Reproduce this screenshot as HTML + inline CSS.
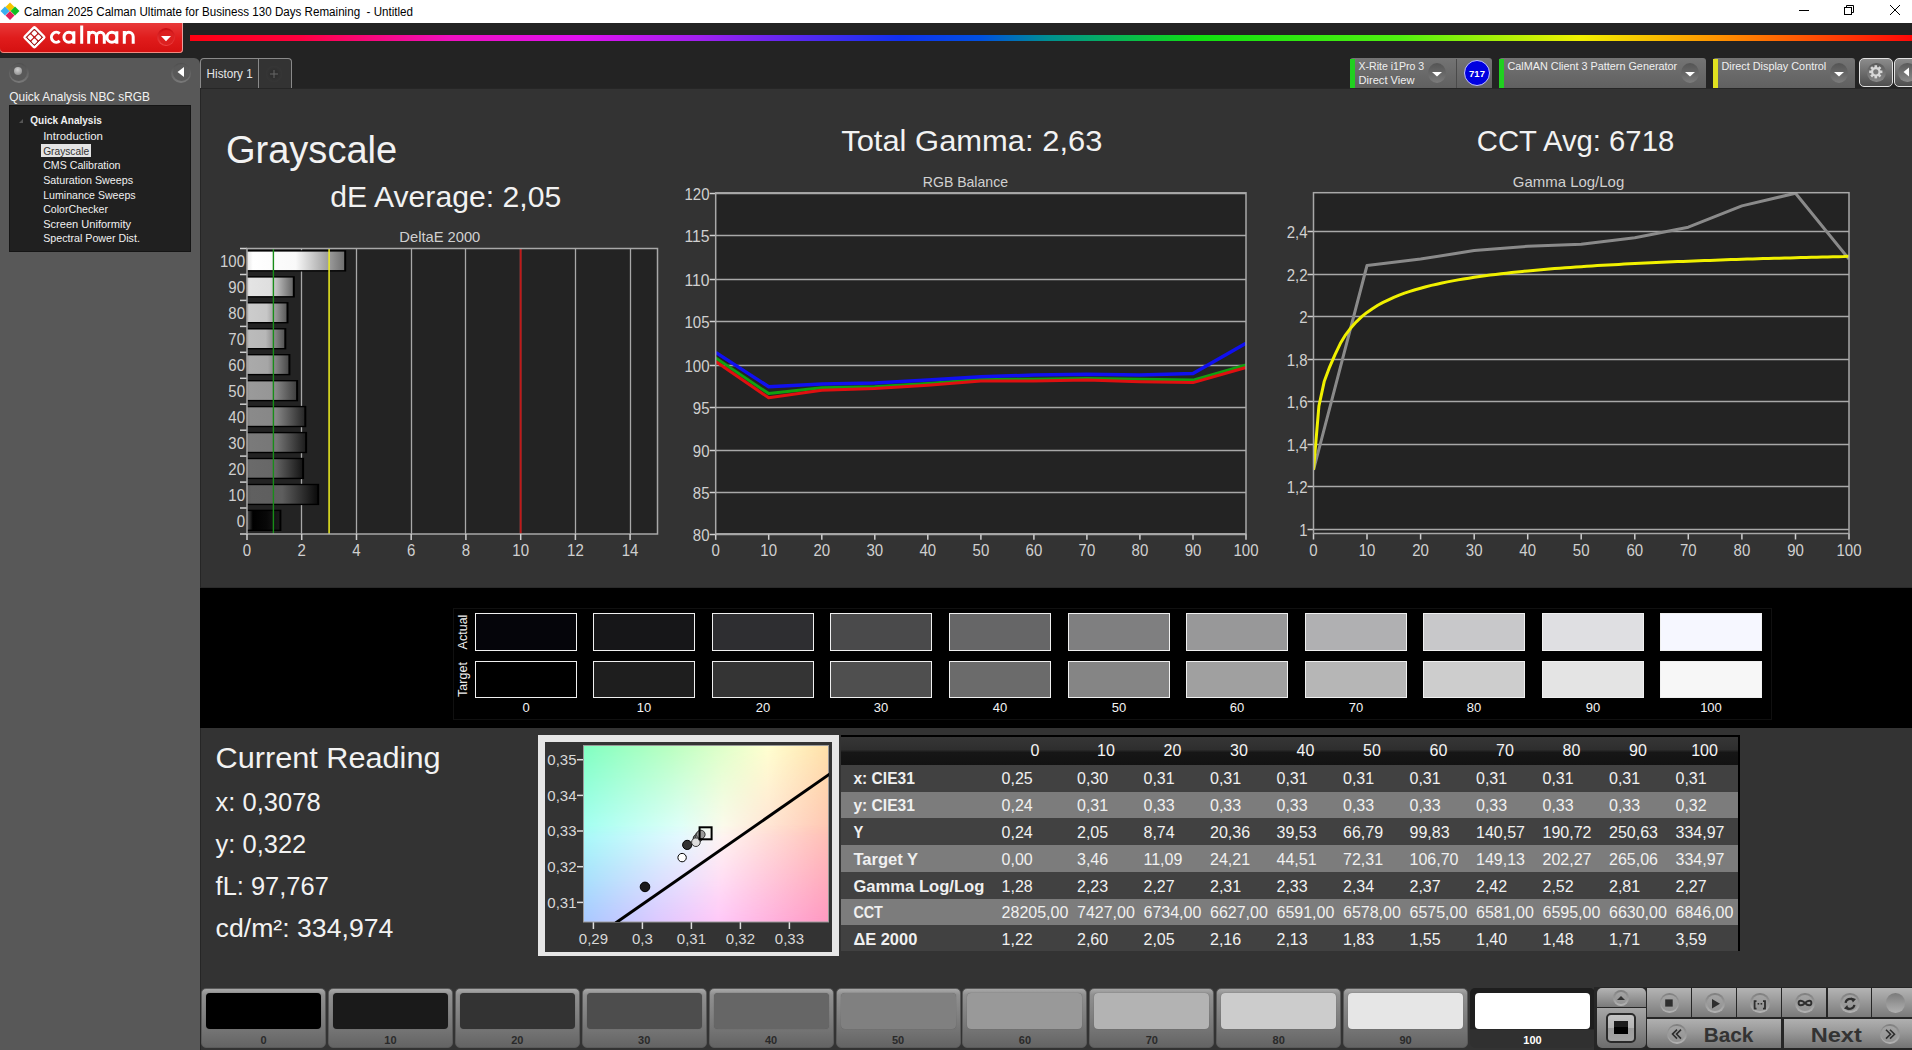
<!DOCTYPE html><html><head><meta charset="utf-8"><title>Calman</title><style>
*{box-sizing:border-box;margin:0;padding:0}
html,body{width:1912px;height:1050px;overflow:hidden;background:#232323;font-family:"Liberation Sans",sans-serif}
.a{position:absolute}
svg text{font-family:"Liberation Sans",sans-serif}
</style></head><body>
<div class="a" style="left:0;top:0;width:1912px;height:23px;background:#fff"></div>
<div class="a" style="left:190px;top:23px;width:1722px;height:35px;background:#232323"></div>
<div class="a" style="left:190px;top:35px;width:1722px;height:6px;filter:blur(0.6px);background:linear-gradient(to right,#ff0010 0.0%,#ff0040 6.4%,#f010c0 15.1%,#e010f0 22.6%,#a020f0 29.6%,#1030f0 41.2%,#0050e0 45.9%,#009090 49.9%,#10e010 58.7%,#50f010 70.3%,#f0f000 80.7%,#ff9000 88.9%,#ff0808 100.0%)"></div>
<div class="a" style="left:0;top:23px;width:183px;height:30px;border-radius:0 0 4px 4px;background:linear-gradient(to bottom,#e83a3a 0%,#e01c1c 50%,#d41010 100%);box-shadow:inset 0 -1px 0 #f08a80,inset -1px 0 0 #e8a0a0"></div>
<svg class="a" style="left:20px;top:23px" width="30" height="30" viewBox="0 0 30 30"><g transform="translate(14.4 14.3) rotate(45)"><rect x="-8.5" y="-8.5" width="17" height="17" rx="2.2" fill="#fff"/><rect x="-5.8" y="-5.8" width="11.6" height="11.6" fill="#c01818" stroke="#8a1010" stroke-width="0.9"/><rect x="-5.1" y="-5.1" width="4.5" height="4.5" rx="0.9" fill="#fff"/><rect x="0.6" y="-5.1" width="4.5" height="4.5" rx="0.9" fill="#fff"/><rect x="-5.1" y="0.6" width="4.5" height="4.5" rx="0.9" fill="#fff"/><rect x="0.6" y="0.6" width="4.5" height="4.5" rx="0.9" fill="#fff"/></g></svg>
<svg class="a" style="left:0;top:0" width="183" height="60"><path d="M59.71 33.57 A4.95 4.95 0 1 0 59.71 40.93 M63.95 37.25 A4.95 4.95 0 1 0 73.85 37.25 A4.95 4.95 0 1 0 63.95 37.25 M73.85 31.30 V43.70 M81.7 25.4 V43.7 M88.7 43.7 V36.20 A3.9 3.9 0 0 1 96.5 36.20 V43.7 M96.5 36.20 A3.9 3.9 0 0 1 104.3 36.20 V43.7 M88.7 31.1 V36.20 M106.95 37.25 A4.95 4.95 0 1 0 116.85 37.25 A4.95 4.95 0 1 0 106.95 37.25 M116.85 31.30 V43.70 M124.3 43.7 V31.1 M124.3 36.75 A4.45 4.45 0 0 1 133.2 36.75 V43.7" fill="none" stroke="#fff" stroke-width="3.0"/></svg>
<div class="a" style="left:157px;top:28px;width:18px;height:18px;border-radius:50%;background:linear-gradient(to bottom,#c80c10,#f04444)"></div>
<div class="a" style="left:158.5px;top:29.5px;width:15px;height:15px;border-radius:50%;background:#dc2020"></div>
<svg class="a" style="left:160px;top:35px" width="12" height="8"><path d="M1 1 H11 L6 6.3 Z" fill="#fff"/></svg>
<div class="a" style="left:0;top:58px;width:200px;height:992px;background:#585858;border-radius:0 6px 0 0"></div>
<div class="a" style="left:8.5px;top:62.5px;width:20px;height:20px;border-radius:50%;background:linear-gradient(to bottom,#4e4e4e,#7a7a7a)"></div>
<div class="a" style="left:10px;top:64px;width:17px;height:17px;border-radius:50%;background:#595959"></div>
<div class="a" style="left:14px;top:67px;width:8px;height:8px;border-radius:50%;background:radial-gradient(circle at 45% 35%,#d0d0d0,#808080)"></div>
<div class="a" style="left:171px;top:62.5px;width:20px;height:20px;border-radius:50%;background:linear-gradient(to bottom,#4e4e4e,#7a7a7a)"></div>
<div class="a" style="left:172.5px;top:64px;width:17px;height:17px;border-radius:50%;background:#595959"></div>
<svg class="a" style="left:176px;top:66px" width="10" height="12"><path d="M8 1 V11 L1.5 6 Z" fill="#fff"/></svg>
<div class="a" style="left:9px;top:105px;width:182px;height:147px;background:#202020;border:1px solid #151515"></div>
<div class="a" style="left:41px;top:143.5px;width:50px;height:13.5px;background:#e4e4e4"></div>
<div class="a" style="left:200px;top:58px;width:92px;height:31px;background:#333;border:1px solid #8a8a8a;border-bottom:none;border-radius:4px 4px 0 0"></div>
<div class="a" style="left:258px;top:59px;width:1px;height:29px;background:#8a8a8a"></div>
<div class="a" style="left:266px;top:66px;width:16px;height:16px;border-radius:50%;background:radial-gradient(circle,#2e2e2e 30%,#3c3c3c 100%)"></div>
<div class="a" style="left:1350px;top:58px;width:142px;height:30px;border-radius:3px 3px 0 0;background:linear-gradient(to bottom,#747474,#606060)"></div>
<div class="a" style="left:1350px;top:59px;width:5px;height:29px;background:#20d020"></div>
<div class="a" style="left:1428px;top:63px;width:18px;height:20px;border-radius:50%;background:linear-gradient(to bottom,#545454,#6a6a6a 60%,#7c7c7c)"></div>
<div class="a" style="left:1456px;top:59px;width:1px;height:29px;background:#4a4a4a"></div>
<div class="a" style="left:1464px;top:60px;width:26px;height:26px;border-radius:50%;background:#0000e0;border:1.5px solid #c0c0ff"></div>
<div class="a" style="left:1499px;top:58px;width:207px;height:30px;border-radius:3px 3px 0 0;background:linear-gradient(to bottom,#747474,#606060)"></div>
<div class="a" style="left:1499px;top:59px;width:5px;height:29px;background:#20d020"></div>
<div class="a" style="left:1681px;top:63px;width:18px;height:20px;border-radius:50%;background:linear-gradient(to bottom,#545454,#6a6a6a 60%,#7c7c7c)"></div>
<div class="a" style="left:1713px;top:58px;width:142px;height:30px;border-radius:3px 3px 0 0;background:linear-gradient(to bottom,#747474,#606060)"></div>
<div class="a" style="left:1713px;top:59px;width:5px;height:29px;background:#e0e020"></div>
<div class="a" style="left:1830px;top:63px;width:18px;height:20px;border-radius:50%;background:linear-gradient(to bottom,#545454,#6a6a6a 60%,#7c7c7c)"></div>
<div class="a" style="left:1859px;top:58px;width:34px;height:28.5px;border-radius:5px;border:1.5px solid #e0e0e0;background:linear-gradient(to bottom,#8c8c8c,#4e4e4e)"></div>
<div class="a" style="left:1893.5px;top:58px;width:25px;height:28.5px;border-radius:5px;border:1.5px solid #e0e0e0;background:linear-gradient(to bottom,#8c8c8c,#4e4e4e)"></div>
<div class="a" style="left:1866.5px;top:62.5px;width:19px;height:19.5px;border-radius:50%;background:linear-gradient(to bottom,#5a5a5a,#8a8a8a)"></div>
<div class="a" style="left:1897.5px;top:62.5px;width:19px;height:19.5px;border-radius:50%;background:linear-gradient(to bottom,#5a5a5a,#8a8a8a)"></div>
<div class="a" style="left:200px;top:88px;width:1712px;height:500px;background:#333;border-top:1px solid #262626;border-left:1px solid #262626;border-bottom:1px solid #2a2a2a"></div>
<div class="a" style="left:200px;top:588px;width:1712px;height:140px;background:#000"></div>
<div class="a" style="left:200px;top:728px;width:1712px;height:322px;background:#333;border-left:1px solid #262626"></div>
<div class="a" style="left:453px;top:608px;width:1319px;height:112px;background:#000;border:1px solid #101010"></div>
<div class="a" style="left:475.0px;top:613px;width:102px;height:38px;background:#05050a;border:1.3px solid #f0f0f0"></div>
<div class="a" style="left:475.0px;top:661px;width:102px;height:37px;background:#000000;border:1.3px solid #f0f0f0"></div>
<div class="a" style="left:593.0px;top:613px;width:102px;height:38px;background:#161618;border:1.3px solid #f0f0f0"></div>
<div class="a" style="left:593.0px;top:661px;width:102px;height:37px;background:#1e1e1e;border:1.3px solid #f0f0f0"></div>
<div class="a" style="left:712.0px;top:613px;width:102px;height:38px;background:#2e2e31;border:1.3px solid #f0f0f0"></div>
<div class="a" style="left:712.0px;top:661px;width:102px;height:37px;background:#343434;border:1.3px solid #f0f0f0"></div>
<div class="a" style="left:830.0px;top:613px;width:102px;height:38px;background:#4a4a4b;border:1.3px solid #f0f0f0"></div>
<div class="a" style="left:830.0px;top:661px;width:102px;height:37px;background:#4f4f4f;border:1.3px solid #f0f0f0"></div>
<div class="a" style="left:949.0px;top:613px;width:102px;height:38px;background:#666667;border:1.3px solid #f0f0f0"></div>
<div class="a" style="left:949.0px;top:661px;width:102px;height:37px;background:#6b6b6b;border:1.3px solid #f0f0f0"></div>
<div class="a" style="left:1068.0px;top:613px;width:102px;height:38px;background:#7f7f80;border:1.3px solid #f0f0f0"></div>
<div class="a" style="left:1068.0px;top:661px;width:102px;height:37px;background:#858585;border:1.3px solid #f0f0f0"></div>
<div class="a" style="left:1186.0px;top:613px;width:102px;height:38px;background:#989899;border:1.3px solid #f0f0f0"></div>
<div class="a" style="left:1186.0px;top:661px;width:102px;height:37px;background:#a0a0a0;border:1.3px solid #f0f0f0"></div>
<div class="a" style="left:1305.0px;top:613px;width:102px;height:38px;background:#b0b0b2;border:1.3px solid #f0f0f0"></div>
<div class="a" style="left:1305.0px;top:661px;width:102px;height:37px;background:#b6b6b6;border:1.3px solid #f0f0f0"></div>
<div class="a" style="left:1423.0px;top:613px;width:102px;height:38px;background:#c8c8ca;border:1.3px solid #f0f0f0"></div>
<div class="a" style="left:1423.0px;top:661px;width:102px;height:37px;background:#cdcdcd;border:1.3px solid #f0f0f0"></div>
<div class="a" style="left:1542.0px;top:613px;width:102px;height:38px;background:#dfdfe2;border:1.3px solid #f0f0f0"></div>
<div class="a" style="left:1542.0px;top:661px;width:102px;height:37px;background:#e4e4e4;border:1.3px solid #f0f0f0"></div>
<div class="a" style="left:1660.0px;top:613px;width:102px;height:38px;background:#f6f7ff;border:1.3px solid #f0f0f0"></div>
<div class="a" style="left:1660.0px;top:661px;width:102px;height:37px;background:#f7f7f7;border:1.3px solid #f0f0f0"></div>
<div class="a" style="left:538px;top:735px;width:301px;height:221px;background:#e6e6e6"></div>
<div class="a" style="left:545px;top:742px;width:287px;height:210px;background:#333"></div>
<div class="a" style="left:583px;top:745px;width:246px;height:177px;overflow:hidden"><div class="a" style="left:0;top:0;width:246px;height:177px;background:linear-gradient(to right,#a8fff8 0%,#e4ffff 40%,#fffaf0 57%,#ffc4b4 100%)"></div><div class="a" style="left:0;top:0;width:246px;height:177px;background:linear-gradient(to right,#80ffc0 0%,#b8ffc0 35%,#ffffd0 75%,#ffe0a8 100%);-webkit-mask-image:linear-gradient(to bottom,#000 0%,transparent 52%)"></div><div class="a" style="left:0;top:0;width:246px;height:177px;background:linear-gradient(to right,#a8c8ff 0%,#dcc8ff 30%,#ffc8f8 55%,#ff98c0 100%);-webkit-mask-image:linear-gradient(to top,#000 0%,transparent 55%)"></div></div>
<div class="a" style="left:841px;top:735px;width:899px;height:216px;background:#000"></div>
<div class="a" style="left:841px;top:737px;width:897px;height:28px;background:linear-gradient(to bottom,#363636 0%,#2e2e2e 45%,#161616 55%,#121212 100%)"></div>
<div class="a" style="left:841px;top:764.5px;width:897px;height:27.0px;background:#414141"></div>
<div class="a" style="left:841px;top:791.5px;width:897px;height:26.7px;background:#7c7c7c"></div>
<div class="a" style="left:841px;top:818.2px;width:897px;height:26.9px;background:#414141"></div>
<div class="a" style="left:841px;top:845.1px;width:897px;height:26.9px;background:#7c7c7c"></div>
<div class="a" style="left:841px;top:872px;width:897px;height:26.6px;background:#414141"></div>
<div class="a" style="left:841px;top:898.6px;width:897px;height:26.8px;background:#7c7c7c"></div>
<div class="a" style="left:841px;top:925.4px;width:897px;height:25.9px;background:#414141"></div>
<div class="a" style="left:201.0px;top:988px;width:125px;height:60px;border-radius:5px;border:1px solid #5a5a5a;background:linear-gradient(to bottom,#a8a8a8 0%,#909090 10%,#7a7a7a 60%,#646464 100%)"></div>
<div class="a" style="left:206.0px;top:993px;width:115px;height:36px;border-radius:4px;background:#000;box-shadow:0 0 1px #555"></div>
<div class="a" style="left:327.9px;top:988px;width:125px;height:60px;border-radius:5px;border:1px solid #5a5a5a;background:linear-gradient(to bottom,#a8a8a8 0%,#909090 10%,#7a7a7a 60%,#646464 100%)"></div>
<div class="a" style="left:332.9px;top:993px;width:115px;height:36px;border-radius:4px;background:#1a1a1a;box-shadow:0 0 1px #555"></div>
<div class="a" style="left:454.8px;top:988px;width:125px;height:60px;border-radius:5px;border:1px solid #5a5a5a;background:linear-gradient(to bottom,#a8a8a8 0%,#909090 10%,#7a7a7a 60%,#646464 100%)"></div>
<div class="a" style="left:459.8px;top:993px;width:115px;height:36px;border-radius:4px;background:#333;box-shadow:0 0 1px #555"></div>
<div class="a" style="left:581.7px;top:988px;width:125px;height:60px;border-radius:5px;border:1px solid #5a5a5a;background:linear-gradient(to bottom,#a8a8a8 0%,#909090 10%,#7a7a7a 60%,#646464 100%)"></div>
<div class="a" style="left:586.7px;top:993px;width:115px;height:36px;border-radius:4px;background:#4d4d4d;box-shadow:0 0 1px #555"></div>
<div class="a" style="left:708.6px;top:988px;width:125px;height:60px;border-radius:5px;border:1px solid #5a5a5a;background:linear-gradient(to bottom,#a8a8a8 0%,#909090 10%,#7a7a7a 60%,#646464 100%)"></div>
<div class="a" style="left:713.6px;top:993px;width:115px;height:36px;border-radius:4px;background:#666;box-shadow:0 0 1px #555"></div>
<div class="a" style="left:835.5px;top:988px;width:125px;height:60px;border-radius:5px;border:1px solid #5a5a5a;background:linear-gradient(to bottom,#a8a8a8 0%,#909090 10%,#7a7a7a 60%,#646464 100%)"></div>
<div class="a" style="left:840.5px;top:993px;width:115px;height:36px;border-radius:4px;background:#808080;box-shadow:0 0 1px #555"></div>
<div class="a" style="left:962.4px;top:988px;width:125px;height:60px;border-radius:5px;border:1px solid #5a5a5a;background:linear-gradient(to bottom,#a8a8a8 0%,#909090 10%,#7a7a7a 60%,#646464 100%)"></div>
<div class="a" style="left:967.4px;top:993px;width:115px;height:36px;border-radius:4px;background:#999;box-shadow:0 0 1px #555"></div>
<div class="a" style="left:1089.3px;top:988px;width:125px;height:60px;border-radius:5px;border:1px solid #5a5a5a;background:linear-gradient(to bottom,#a8a8a8 0%,#909090 10%,#7a7a7a 60%,#646464 100%)"></div>
<div class="a" style="left:1094.3px;top:993px;width:115px;height:36px;border-radius:4px;background:#b3b3b3;box-shadow:0 0 1px #555"></div>
<div class="a" style="left:1216.2px;top:988px;width:125px;height:60px;border-radius:5px;border:1px solid #5a5a5a;background:linear-gradient(to bottom,#a8a8a8 0%,#909090 10%,#7a7a7a 60%,#646464 100%)"></div>
<div class="a" style="left:1221.2px;top:993px;width:115px;height:36px;border-radius:4px;background:#ccc;box-shadow:0 0 1px #555"></div>
<div class="a" style="left:1343.1px;top:988px;width:125px;height:60px;border-radius:5px;border:1px solid #5a5a5a;background:linear-gradient(to bottom,#a8a8a8 0%,#909090 10%,#7a7a7a 60%,#646464 100%)"></div>
<div class="a" style="left:1348.1px;top:993px;width:115px;height:36px;border-radius:4px;background:#e6e6e6;box-shadow:0 0 1px #555"></div>
<div class="a" style="left:1470.0px;top:988px;width:125px;height:60px;border-radius:5px;background:linear-gradient(to bottom,#1e1e1e 0%,#1e1e1e 68%,#303030 70%,#303030 100%)"></div>
<div class="a" style="left:1475.0px;top:993px;width:115px;height:36px;border-radius:4px;background:#fff"></div>
<div class="a" style="left:1594px;top:987px;width:318px;height:63px;background:#262626"></div>
<div class="a" style="left:1597px;top:988px;width:48.5px;height:18.5px;border-radius:5px 5px 0 0;background:linear-gradient(to bottom,#b4b4b4 0%,#9a9a9a 45%,#7a7a7a 100%);"></div>
<div class="a" style="left:1597px;top:1007.5px;width:48.5px;height:40.5px;border-radius:0 0 5px 5px;background:linear-gradient(to bottom,#a6a6a6,#6c6c6c)"></div>
<div class="a" style="left:1613.0px;top:990.0px;width:16px;height:16px;border-radius:50%;background:linear-gradient(to bottom,#7e7e7e,#b4b4b4)"></div>
<div class="a" style="left:1614.6px;top:991.6px;width:12.8px;height:12.8px;border-radius:50%;background:linear-gradient(to bottom,#a4a4a4,#929292)"></div>
<div class="a" style="left:1605.5px;top:1012.7px;width:30.5px;height:30px;border-radius:5px;border:2.5px solid #2a2a2a;background:linear-gradient(to bottom,#c4c4c4 0%,#b4b4b4 50%,#9c9c9c 51%,#a4a4a4 100%)"></div>
<div class="a" style="left:1614.3px;top:1021.2px;width:13.3px;height:12.7px;background:linear-gradient(to bottom,#1c1c1c 50%,#000 50%)"></div>
<div class="a" style="left:1646.5px;top:988px;width:44.7px;height:29.2px;background:linear-gradient(to bottom,#b4b4b4 0%,#9a9a9a 45%,#7a7a7a 100%);"></div>
<div class="a" style="left:1659.7px;top:993.1px;width:19.6px;height:19.6px;border-radius:50%;background:linear-gradient(to bottom,#7e7e7e,#b4b4b4)"></div>
<div class="a" style="left:1661.2px;top:994.7px;width:16.4px;height:16.4px;border-radius:50%;background:linear-gradient(to bottom,#a4a4a4,#929292)"></div>
<div class="a" style="left:1692.4px;top:988px;width:43.8px;height:29.2px;background:linear-gradient(to bottom,#b4b4b4 0%,#9a9a9a 45%,#7a7a7a 100%);"></div>
<div class="a" style="left:1705.1px;top:993.1px;width:19.6px;height:19.6px;border-radius:50%;background:linear-gradient(to bottom,#7e7e7e,#b4b4b4)"></div>
<div class="a" style="left:1706.7px;top:994.7px;width:16.4px;height:16.4px;border-radius:50%;background:linear-gradient(to bottom,#a4a4a4,#929292)"></div>
<div class="a" style="left:1737.4px;top:988px;width:43.7px;height:29.2px;background:linear-gradient(to bottom,#b4b4b4 0%,#9a9a9a 45%,#7a7a7a 100%);"></div>
<div class="a" style="left:1750.0px;top:993.1px;width:19.6px;height:19.6px;border-radius:50%;background:linear-gradient(to bottom,#7e7e7e,#b4b4b4)"></div>
<div class="a" style="left:1751.6px;top:994.7px;width:16.4px;height:16.4px;border-radius:50%;background:linear-gradient(to bottom,#a4a4a4,#929292)"></div>
<div class="a" style="left:1782.3px;top:988px;width:44.1px;height:29.2px;background:linear-gradient(to bottom,#b4b4b4 0%,#9a9a9a 45%,#7a7a7a 100%);"></div>
<div class="a" style="left:1795.1px;top:993.1px;width:19.6px;height:19.6px;border-radius:50%;background:linear-gradient(to bottom,#7e7e7e,#b4b4b4)"></div>
<div class="a" style="left:1796.7px;top:994.7px;width:16.4px;height:16.4px;border-radius:50%;background:linear-gradient(to bottom,#a4a4a4,#929292)"></div>
<div class="a" style="left:1827.6px;top:988px;width:43.6px;height:29.2px;background:linear-gradient(to bottom,#b4b4b4 0%,#9a9a9a 45%,#7a7a7a 100%);"></div>
<div class="a" style="left:1840.2px;top:993.1px;width:19.6px;height:19.6px;border-radius:50%;background:linear-gradient(to bottom,#7e7e7e,#b4b4b4)"></div>
<div class="a" style="left:1841.8px;top:994.7px;width:16.4px;height:16.4px;border-radius:50%;background:linear-gradient(to bottom,#a4a4a4,#929292)"></div>
<div class="a" style="left:1872.4px;top:988px;width:40.4px;height:29.2px;background:linear-gradient(to bottom,#b4b4b4 0%,#9a9a9a 45%,#7a7a7a 100%);"></div>
<div class="a" style="left:1885.9px;top:993.1px;width:19.6px;height:19.6px;border-radius:50%;background:linear-gradient(to bottom,#7a7a7a,#9c9c9c 60%,#b0b0b0)"></div>
<div class="a" style="left:1646.5px;top:1019px;width:134.6px;height:29px;border-radius:0 0 0 4px;background:linear-gradient(to bottom,#b0b0b0 0%,#989898 45%,#747474 100%)"></div>
<div class="a" style="left:1783.5px;top:1019px;width:130px;height:29px;background:linear-gradient(to bottom,#b0b0b0 0%,#989898 45%,#747474 100%)"></div>
<div class="a" style="left:1666.7px;top:1024.0px;width:20px;height:20px;border-radius:50%;background:linear-gradient(to bottom,#7e7e7e,#b4b4b4)"></div>
<div class="a" style="left:1668.3px;top:1025.6px;width:16.8px;height:16.8px;border-radius:50%;background:linear-gradient(to bottom,#a4a4a4,#929292)"></div>
<div class="a" style="left:1879.8px;top:1024.0px;width:20px;height:20px;border-radius:50%;background:linear-gradient(to bottom,#7e7e7e,#b4b4b4)"></div>
<div class="a" style="left:1881.4px;top:1025.6px;width:16.8px;height:16.8px;border-radius:50%;background:linear-gradient(to bottom,#a4a4a4,#929292)"></div>
<svg class="a" style="left:0;top:0" width="1912" height="1050" viewBox="0 0 1912 1050">
<defs><linearGradient id="bg10" x1="0" x2="1" y1="0" y2="0"><stop offset="0" stop-color="rgb(229,229,229)"/><stop offset="0.06" stop-color="rgb(255,255,255)"/><stop offset="0.5" stop-color="rgb(249,249,249)"/><stop offset="1" stop-color="rgb(112,112,112)"/></linearGradient><linearGradient id="bg9" x1="0" x2="1" y1="0" y2="0"><stop offset="0" stop-color="rgb(205,205,205)"/><stop offset="0.06" stop-color="rgb(228,228,228)"/><stop offset="0.5" stop-color="rgb(223,223,223)"/><stop offset="1" stop-color="rgb(102,102,102)"/></linearGradient><linearGradient id="bg8" x1="0" x2="1" y1="0" y2="0"><stop offset="0" stop-color="rgb(183,183,183)"/><stop offset="0.06" stop-color="rgb(204,204,204)"/><stop offset="0.5" stop-color="rgb(199,199,199)"/><stop offset="1" stop-color="rgb(92,92,92)"/></linearGradient><linearGradient id="bg7" x1="0" x2="1" y1="0" y2="0"><stop offset="0" stop-color="rgb(168,168,168)"/><stop offset="0.06" stop-color="rgb(187,187,187)"/><stop offset="0.5" stop-color="rgb(183,183,183)"/><stop offset="1" stop-color="rgb(84,84,84)"/></linearGradient><linearGradient id="bg6" x1="0" x2="1" y1="0" y2="0"><stop offset="0" stop-color="rgb(153,153,153)"/><stop offset="0.06" stop-color="rgb(170,170,170)"/><stop offset="0.5" stop-color="rgb(166,166,166)"/><stop offset="1" stop-color="rgb(74,74,74)"/></linearGradient><linearGradient id="bg5" x1="0" x2="1" y1="0" y2="0"><stop offset="0" stop-color="rgb(138,138,138)"/><stop offset="0.06" stop-color="rgb(154,154,154)"/><stop offset="0.5" stop-color="rgb(150,150,150)"/><stop offset="1" stop-color="rgb(64,64,64)"/></linearGradient><linearGradient id="bg4" x1="0" x2="1" y1="0" y2="0"><stop offset="0" stop-color="rgb(124,124,124)"/><stop offset="0.06" stop-color="rgb(138,138,138)"/><stop offset="0.5" stop-color="rgb(135,135,135)"/><stop offset="1" stop-color="rgb(40,40,40)"/></linearGradient><linearGradient id="bg3" x1="0" x2="1" y1="0" y2="0"><stop offset="0" stop-color="rgb(109,109,109)"/><stop offset="0.06" stop-color="rgb(122,122,122)"/><stop offset="0.5" stop-color="rgb(119,119,119)"/><stop offset="1" stop-color="rgb(30,30,30)"/></linearGradient><linearGradient id="bg2" x1="0" x2="1" y1="0" y2="0"><stop offset="0" stop-color="rgb(95,95,95)"/><stop offset="0.06" stop-color="rgb(106,106,106)"/><stop offset="0.5" stop-color="rgb(103,103,103)"/><stop offset="1" stop-color="rgb(22,22,22)"/></linearGradient><linearGradient id="bg1" x1="0" x2="1" y1="0" y2="0"><stop offset="0" stop-color="rgb(86,86,86)"/><stop offset="0.06" stop-color="rgb(96,96,96)"/><stop offset="0.5" stop-color="rgb(94,94,94)"/><stop offset="1" stop-color="rgb(12,12,12)"/></linearGradient><linearGradient id="bg0" x1="0" x2="1" y1="0" y2="0"><stop offset="0" stop-color="rgb(80,80,80)"/><stop offset="0.18" stop-color="rgb(0,0,0)"/><stop offset="0.6" stop-color="rgb(8,8,8)"/><stop offset="1" stop-color="rgb(26,26,26)"/></linearGradient></defs>
<g><rect x="6.8" y="3.8" width="6.4" height="6.4" fill="#f5c400" transform="rotate(45 10 7)"/><rect x="1.7999999999999998" y="7.8" width="6.4" height="6.4" fill="#3ab0f0" transform="rotate(45 5 11)"/><rect x="11.8" y="7.8" width="6.4" height="6.4" fill="#10c020" transform="rotate(45 15 11)"/><rect x="6.8" y="12.3" width="6.4" height="6.4" fill="#e0205a" transform="rotate(45 10 15.5)"/></g><text x="24" y="16" font-size="12" fill="#000" text-anchor="start" font-weight="normal"  textLength="389" lengthAdjust="spacingAndGlyphs">Calman 2025 Calman Ultimate for Business 130 Days Remaining&#160; - Untitled</text><line x1="1799" y1="10.5" x2="1809" y2="10.5" stroke="#000" stroke-width="1"/><path d="M1846.5 7 V5.5 H1853.5 V12.5 H1852" fill="none" stroke="#000" stroke-width="1"/><rect x="1844.5" y="7.5" width="7" height="7" fill="none" stroke="#000" stroke-width="1"/><path d="M1890 5 L1900 15 M1900 5 L1890 15" stroke="#000" stroke-width="1"/>
<text x="9.3" y="101" font-size="12" fill="#f2f2f2" text-anchor="start" font-weight="normal"  textLength="140.6" lengthAdjust="spacingAndGlyphs">Quick Analysis NBC sRGB</text><path d="M19 123 L23 119 L23 123 Z" fill="#555"/><text x="30.2" y="124.3" font-size="11" fill="#f0f0f0" text-anchor="start" font-weight="bold"  textLength="71.6" lengthAdjust="spacingAndGlyphs">Quick Analysis</text><text x="43.2" y="140.1" font-size="11" fill="#f0f0f0" text-anchor="start" font-weight="normal"  textLength="59.7" lengthAdjust="spacingAndGlyphs">Introduction</text><text x="43.2" y="154.7" font-size="11" fill="#333" text-anchor="start" font-weight="normal"  textLength="45.9" lengthAdjust="spacingAndGlyphs">Grayscale</text><text x="43.2" y="169.29999999999998" font-size="11" fill="#f0f0f0" text-anchor="start" font-weight="normal"  textLength="77.3" lengthAdjust="spacingAndGlyphs">CMS Calibration</text><text x="43.2" y="183.89999999999998" font-size="11" fill="#f0f0f0" text-anchor="start" font-weight="normal"  textLength="89.9" lengthAdjust="spacingAndGlyphs">Saturation Sweeps</text><text x="43.2" y="198.5" font-size="11" fill="#f0f0f0" text-anchor="start" font-weight="normal"  textLength="92.4" lengthAdjust="spacingAndGlyphs">Luminance Sweeps</text><text x="43.2" y="213.1" font-size="11" fill="#f0f0f0" text-anchor="start" font-weight="normal"  textLength="64.8" lengthAdjust="spacingAndGlyphs">ColorChecker</text><text x="43.2" y="227.7" font-size="11" fill="#f0f0f0" text-anchor="start" font-weight="normal"  textLength="87.9" lengthAdjust="spacingAndGlyphs">Screen Uniformity</text><text x="43.2" y="242.3" font-size="11" fill="#f0f0f0" text-anchor="start" font-weight="normal"  textLength="96.7" lengthAdjust="spacingAndGlyphs">Spectral Power Dist.</text><text x="206.6" y="78.2" font-size="12" fill="#e6e6e6" text-anchor="start" font-weight="normal"  textLength="46.1" lengthAdjust="spacingAndGlyphs">History 1</text><path d="M274 70 V78 M270 74 H278" stroke="#666" stroke-width="1"/><text x="1358.5" y="70" font-size="11" fill="#f0f0f0" text-anchor="start" font-weight="normal"  textLength="65.6" lengthAdjust="spacingAndGlyphs">X-Rite i1Pro 3</text><text x="1358.5" y="84" font-size="11" fill="#f0f0f0" text-anchor="start" font-weight="normal"  textLength="56" lengthAdjust="spacingAndGlyphs">Direct View</text><path d="M1432 72 H1442 L1437 76.5 Z" fill="#fff"/><text x="1477" y="76.5" font-size="9.5" fill="#fff" text-anchor="middle" font-weight="bold" >717</text><text x="1507.5" y="70" font-size="11" fill="#f0f0f0" text-anchor="start" font-weight="normal"  textLength="169.7" lengthAdjust="spacingAndGlyphs">CalMAN Client 3 Pattern Generator</text><path d="M1685 72 H1695 L1690 76.5 Z" fill="#fff"/><text x="1721.5" y="70" font-size="11" fill="#f0f0f0" text-anchor="start" font-weight="normal"  textLength="104.7" lengthAdjust="spacingAndGlyphs">Direct Display Control</text><path d="M1834 72 H1844 L1839 76.5 Z" fill="#fff"/><g transform="translate(1875.8 71.8)" fill="#d8d8d8"><rect x="-1.3" y="-6.6" width="2.6" height="3" transform="rotate(0)"/><rect x="-1.3" y="-6.6" width="2.6" height="3" transform="rotate(45)"/><rect x="-1.3" y="-6.6" width="2.6" height="3" transform="rotate(90)"/><rect x="-1.3" y="-6.6" width="2.6" height="3" transform="rotate(135)"/><rect x="-1.3" y="-6.6" width="2.6" height="3" transform="rotate(180)"/><rect x="-1.3" y="-6.6" width="2.6" height="3" transform="rotate(225)"/><rect x="-1.3" y="-6.6" width="2.6" height="3" transform="rotate(270)"/><rect x="-1.3" y="-6.6" width="2.6" height="3" transform="rotate(315)"/><circle r="4.8"/><circle r="2.6" fill="#7a7a7a"/></g><path d="M1909 67.5 V76.5 L1903.5 72 Z" fill="#fff"/><text x="225.9" y="162.8" font-size="38" fill="#f2f2f2" text-anchor="start" font-weight="normal"  textLength="171.3" lengthAdjust="spacingAndGlyphs">Grayscale</text><text x="330.3" y="206.7" font-size="29" fill="#f2f2f2" text-anchor="start" font-weight="normal"  textLength="230.9" lengthAdjust="spacingAndGlyphs">dE Average: 2,05</text><text x="841.2" y="150.8" font-size="30" fill="#f2f2f2" text-anchor="start" font-weight="normal"  textLength="261.2" lengthAdjust="spacingAndGlyphs">Total Gamma: 2,63</text><text x="1476.8" y="151" font-size="30" fill="#f2f2f2" text-anchor="start" font-weight="normal"  textLength="197.4" lengthAdjust="spacingAndGlyphs">CCT Avg: 6718</text><text x="439.8" y="242.4" font-size="14.5" fill="#d0d0d0" text-anchor="middle" font-weight="normal"  textLength="80.9" lengthAdjust="spacingAndGlyphs">DeltaE 2000</text><rect x="247" y="248.5" width="410.5" height="285.5" fill="#232323"/><line x1="301.5" y1="248.5" x2="301.5" y2="534" stroke="#a8a8a8" stroke-width="1.3"/><line x1="356.5" y1="248.5" x2="356.5" y2="534" stroke="#a8a8a8" stroke-width="1.3"/><line x1="411.5" y1="248.5" x2="411.5" y2="534" stroke="#a8a8a8" stroke-width="1.3"/><line x1="465.5" y1="248.5" x2="465.5" y2="534" stroke="#a8a8a8" stroke-width="1.3"/><line x1="520.5" y1="248.5" x2="520.5" y2="534" stroke="#a8a8a8" stroke-width="1.3"/><line x1="575.5" y1="248.5" x2="575.5" y2="534" stroke="#a8a8a8" stroke-width="1.3"/><line x1="630.5" y1="248.5" x2="630.5" y2="534" stroke="#a8a8a8" stroke-width="1.3"/><rect x="247" y="250.2" width="99.2" height="21.3" fill="#000"/><rect x="247" y="251.6" width="97.2" height="18.5" fill="url(#bg10)"/><text x="245" y="267.47727272727275" font-size="16.2" fill="#d0d0d0" text-anchor="end" font-weight="normal"  textLength="25.02" lengthAdjust="spacingAndGlyphs">100</text><rect x="247" y="276.2" width="47.8" height="21.3" fill="#000"/><rect x="247" y="277.6" width="45.8" height="18.5" fill="url(#bg9)"/><text x="245" y="293.4318181818182" font-size="16.2" fill="#d0d0d0" text-anchor="end" font-weight="normal"  textLength="16.68" lengthAdjust="spacingAndGlyphs">90</text><rect x="247" y="302.1" width="41.5" height="21.3" fill="#000"/><rect x="247" y="303.5" width="39.5" height="18.5" fill="url(#bg8)"/><text x="245" y="319.3863636363636" font-size="16.2" fill="#d0d0d0" text-anchor="end" font-weight="normal"  textLength="16.68" lengthAdjust="spacingAndGlyphs">80</text><rect x="247" y="328.1" width="39.3" height="21.3" fill="#000"/><rect x="247" y="329.5" width="37.3" height="18.5" fill="url(#bg7)"/><text x="245" y="345.3409090909091" font-size="16.2" fill="#d0d0d0" text-anchor="end" font-weight="normal"  textLength="16.68" lengthAdjust="spacingAndGlyphs">70</text><rect x="247" y="354.0" width="43.4" height="21.3" fill="#000"/><rect x="247" y="355.4" width="41.4" height="18.5" fill="url(#bg6)"/><text x="245" y="371.29545454545456" font-size="16.2" fill="#d0d0d0" text-anchor="end" font-weight="normal"  textLength="16.68" lengthAdjust="spacingAndGlyphs">60</text><rect x="247" y="380.0" width="51.1" height="21.3" fill="#000"/><rect x="247" y="381.4" width="49.1" height="18.5" fill="url(#bg5)"/><text x="245" y="397.25" font-size="16.2" fill="#d0d0d0" text-anchor="end" font-weight="normal"  textLength="16.68" lengthAdjust="spacingAndGlyphs">50</text><rect x="247" y="405.9" width="59.3" height="21.3" fill="#000"/><rect x="247" y="407.3" width="57.3" height="18.5" fill="url(#bg4)"/><text x="245" y="423.2045454545455" font-size="16.2" fill="#d0d0d0" text-anchor="end" font-weight="normal"  textLength="16.68" lengthAdjust="spacingAndGlyphs">40</text><rect x="247" y="431.9" width="60.1" height="21.3" fill="#000"/><rect x="247" y="433.3" width="58.1" height="18.5" fill="url(#bg3)"/><text x="245" y="449.15909090909093" font-size="16.2" fill="#d0d0d0" text-anchor="end" font-weight="normal"  textLength="16.68" lengthAdjust="spacingAndGlyphs">30</text><rect x="247" y="457.8" width="57.1" height="21.3" fill="#000"/><rect x="247" y="459.2" width="55.1" height="18.5" fill="url(#bg2)"/><text x="245" y="475.1136363636364" font-size="16.2" fill="#d0d0d0" text-anchor="end" font-weight="normal"  textLength="16.68" lengthAdjust="spacingAndGlyphs">20</text><rect x="247" y="483.8" width="72.2" height="21.3" fill="#000"/><rect x="247" y="485.2" width="70.2" height="18.5" fill="url(#bg1)"/><text x="245" y="501.0681818181818" font-size="16.2" fill="#d0d0d0" text-anchor="end" font-weight="normal"  textLength="16.68" lengthAdjust="spacingAndGlyphs">10</text><rect x="247" y="509.7" width="34.4" height="21.3" fill="#000"/><rect x="247" y="511.1" width="32.4" height="18.5" fill="url(#bg0)"/><text x="245" y="527.0227272727273" font-size="16.2" fill="#d0d0d0" text-anchor="end" font-weight="normal"  textLength="8.34" lengthAdjust="spacingAndGlyphs">0</text><line x1="240" y1="248.5" x2="247" y2="248.5" stroke="#d0d0d0" stroke-width="1.5"/><line x1="240" y1="274.5" x2="247" y2="274.5" stroke="#d0d0d0" stroke-width="1.5"/><line x1="240" y1="300.4" x2="247" y2="300.4" stroke="#d0d0d0" stroke-width="1.5"/><line x1="240" y1="326.4" x2="247" y2="326.4" stroke="#d0d0d0" stroke-width="1.5"/><line x1="240" y1="352.3" x2="247" y2="352.3" stroke="#d0d0d0" stroke-width="1.5"/><line x1="240" y1="378.3" x2="247" y2="378.3" stroke="#d0d0d0" stroke-width="1.5"/><line x1="240" y1="404.2" x2="247" y2="404.2" stroke="#d0d0d0" stroke-width="1.5"/><line x1="240" y1="430.2" x2="247" y2="430.2" stroke="#d0d0d0" stroke-width="1.5"/><line x1="240" y1="456.1" x2="247" y2="456.1" stroke="#d0d0d0" stroke-width="1.5"/><line x1="240" y1="482.1" x2="247" y2="482.1" stroke="#d0d0d0" stroke-width="1.5"/><line x1="240" y1="508.0" x2="247" y2="508.0" stroke="#d0d0d0" stroke-width="1.5"/><line x1="240" y1="534.0" x2="247" y2="534.0" stroke="#d0d0d0" stroke-width="1.5"/><line x1="273.4" y1="248.5" x2="273.4" y2="534" stroke="#188c18" stroke-width="1.4"/><line x1="329.1" y1="248.5" x2="329.1" y2="534" stroke="#f0f020" stroke-width="1.5"/><line x1="520.7" y1="248.5" x2="520.7" y2="534" stroke="#c01818" stroke-width="1.8"/><rect x="247" y="248.5" width="410.5" height="285.5" fill="none" stroke="#a8a8a8" stroke-width="1.5"/><line x1="247.0" y1="534" x2="247.0" y2="540" stroke="#d0d0d0" stroke-width="1.5"/><text x="247.0" y="556" font-size="16.2" fill="#d0d0d0" text-anchor="middle" font-weight="normal"  textLength="8.34" lengthAdjust="spacingAndGlyphs">0</text><line x1="301.7" y1="534" x2="301.7" y2="540" stroke="#d0d0d0" stroke-width="1.5"/><text x="301.7" y="556" font-size="16.2" fill="#d0d0d0" text-anchor="middle" font-weight="normal"  textLength="8.34" lengthAdjust="spacingAndGlyphs">2</text><line x1="356.5" y1="534" x2="356.5" y2="540" stroke="#d0d0d0" stroke-width="1.5"/><text x="356.5" y="556" font-size="16.2" fill="#d0d0d0" text-anchor="middle" font-weight="normal"  textLength="8.34" lengthAdjust="spacingAndGlyphs">4</text><line x1="411.2" y1="534" x2="411.2" y2="540" stroke="#d0d0d0" stroke-width="1.5"/><text x="411.2" y="556" font-size="16.2" fill="#d0d0d0" text-anchor="middle" font-weight="normal"  textLength="8.34" lengthAdjust="spacingAndGlyphs">6</text><line x1="465.9" y1="534" x2="465.9" y2="540" stroke="#d0d0d0" stroke-width="1.5"/><text x="465.9" y="556" font-size="16.2" fill="#d0d0d0" text-anchor="middle" font-weight="normal"  textLength="8.34" lengthAdjust="spacingAndGlyphs">8</text><line x1="520.7" y1="534" x2="520.7" y2="540" stroke="#d0d0d0" stroke-width="1.5"/><text x="520.7" y="556" font-size="16.2" fill="#d0d0d0" text-anchor="middle" font-weight="normal"  textLength="16.68" lengthAdjust="spacingAndGlyphs">10</text><line x1="575.4" y1="534" x2="575.4" y2="540" stroke="#d0d0d0" stroke-width="1.5"/><text x="575.4" y="556" font-size="16.2" fill="#d0d0d0" text-anchor="middle" font-weight="normal"  textLength="16.68" lengthAdjust="spacingAndGlyphs">12</text><line x1="630.1" y1="534" x2="630.1" y2="540" stroke="#d0d0d0" stroke-width="1.5"/><text x="630.1" y="556" font-size="16.2" fill="#d0d0d0" text-anchor="middle" font-weight="normal"  textLength="16.68" lengthAdjust="spacingAndGlyphs">14</text><text x="965.4" y="186.9" font-size="14.5" fill="#d0d0d0" text-anchor="middle" font-weight="normal"  textLength="85.2" lengthAdjust="spacingAndGlyphs">RGB Balance</text><rect x="715.7" y="192.8" width="530.3" height="340.99999999999994" fill="#232323"/><line x1="715.7" y1="193.5" x2="1246" y2="193.5" stroke="#a8a8a8" stroke-width="1.3"/><line x1="709.7" y1="193.5" x2="715.7" y2="193.5" stroke="#d0d0d0" stroke-width="1.5"/><text x="709.5" y="199.5" font-size="16.2" fill="#d0d0d0" text-anchor="end" font-weight="normal"  textLength="25.02" lengthAdjust="spacingAndGlyphs">120</text><line x1="715.7" y1="235.5" x2="1246" y2="235.5" stroke="#a8a8a8" stroke-width="1.3"/><line x1="709.7" y1="235.5" x2="715.7" y2="235.5" stroke="#d0d0d0" stroke-width="1.5"/><text x="709.5" y="241.5" font-size="16.2" fill="#d0d0d0" text-anchor="end" font-weight="normal"  textLength="25.02" lengthAdjust="spacingAndGlyphs">115</text><line x1="715.7" y1="279.5" x2="1246" y2="279.5" stroke="#a8a8a8" stroke-width="1.3"/><line x1="709.7" y1="279.5" x2="715.7" y2="279.5" stroke="#d0d0d0" stroke-width="1.5"/><text x="709.5" y="285.5" font-size="16.2" fill="#d0d0d0" text-anchor="end" font-weight="normal"  textLength="25.02" lengthAdjust="spacingAndGlyphs">110</text><line x1="715.7" y1="321.5" x2="1246" y2="321.5" stroke="#a8a8a8" stroke-width="1.3"/><line x1="709.7" y1="321.5" x2="715.7" y2="321.5" stroke="#d0d0d0" stroke-width="1.5"/><text x="709.5" y="327.5" font-size="16.2" fill="#d0d0d0" text-anchor="end" font-weight="normal"  textLength="25.02" lengthAdjust="spacingAndGlyphs">105</text><line x1="715.7" y1="365.5" x2="1246" y2="365.5" stroke="#a8a8a8" stroke-width="1.3"/><line x1="709.7" y1="365.5" x2="715.7" y2="365.5" stroke="#d0d0d0" stroke-width="1.5"/><text x="709.5" y="371.5" font-size="16.2" fill="#d0d0d0" text-anchor="end" font-weight="normal"  textLength="25.02" lengthAdjust="spacingAndGlyphs">100</text><line x1="715.7" y1="407.5" x2="1246" y2="407.5" stroke="#a8a8a8" stroke-width="1.3"/><line x1="709.7" y1="407.5" x2="715.7" y2="407.5" stroke="#d0d0d0" stroke-width="1.5"/><text x="709.5" y="413.5" font-size="16.2" fill="#d0d0d0" text-anchor="end" font-weight="normal"  textLength="16.68" lengthAdjust="spacingAndGlyphs">95</text><line x1="715.7" y1="450.5" x2="1246" y2="450.5" stroke="#a8a8a8" stroke-width="1.3"/><line x1="709.7" y1="450.5" x2="715.7" y2="450.5" stroke="#d0d0d0" stroke-width="1.5"/><text x="709.5" y="456.5" font-size="16.2" fill="#d0d0d0" text-anchor="end" font-weight="normal"  textLength="16.68" lengthAdjust="spacingAndGlyphs">90</text><line x1="715.7" y1="492.5" x2="1246" y2="492.5" stroke="#a8a8a8" stroke-width="1.3"/><line x1="709.7" y1="492.5" x2="715.7" y2="492.5" stroke="#d0d0d0" stroke-width="1.5"/><text x="709.5" y="498.5" font-size="16.2" fill="#d0d0d0" text-anchor="end" font-weight="normal"  textLength="16.68" lengthAdjust="spacingAndGlyphs">85</text><line x1="715.7" y1="534.5" x2="1246" y2="534.5" stroke="#a8a8a8" stroke-width="1.3"/><line x1="709.7" y1="534.5" x2="715.7" y2="534.5" stroke="#d0d0d0" stroke-width="1.5"/><text x="709.5" y="540.5" font-size="16.2" fill="#d0d0d0" text-anchor="end" font-weight="normal"  textLength="16.68" lengthAdjust="spacingAndGlyphs">80</text><line x1="715.7" y1="533.8" x2="715.7" y2="539.8" stroke="#d0d0d0" stroke-width="1.5"/><text x="715.7" y="556" font-size="16.2" fill="#d0d0d0" text-anchor="middle" font-weight="normal"  textLength="8.34" lengthAdjust="spacingAndGlyphs">0</text><line x1="768.7" y1="533.8" x2="768.7" y2="539.8" stroke="#d0d0d0" stroke-width="1.5"/><text x="768.7" y="556" font-size="16.2" fill="#d0d0d0" text-anchor="middle" font-weight="normal"  textLength="16.68" lengthAdjust="spacingAndGlyphs">10</text><line x1="821.8" y1="533.8" x2="821.8" y2="539.8" stroke="#d0d0d0" stroke-width="1.5"/><text x="821.8" y="556" font-size="16.2" fill="#d0d0d0" text-anchor="middle" font-weight="normal"  textLength="16.68" lengthAdjust="spacingAndGlyphs">20</text><line x1="874.8" y1="533.8" x2="874.8" y2="539.8" stroke="#d0d0d0" stroke-width="1.5"/><text x="874.8" y="556" font-size="16.2" fill="#d0d0d0" text-anchor="middle" font-weight="normal"  textLength="16.68" lengthAdjust="spacingAndGlyphs">30</text><line x1="927.8" y1="533.8" x2="927.8" y2="539.8" stroke="#d0d0d0" stroke-width="1.5"/><text x="927.8" y="556" font-size="16.2" fill="#d0d0d0" text-anchor="middle" font-weight="normal"  textLength="16.68" lengthAdjust="spacingAndGlyphs">40</text><line x1="980.9" y1="533.8" x2="980.9" y2="539.8" stroke="#d0d0d0" stroke-width="1.5"/><text x="980.9" y="556" font-size="16.2" fill="#d0d0d0" text-anchor="middle" font-weight="normal"  textLength="16.68" lengthAdjust="spacingAndGlyphs">50</text><line x1="1033.9" y1="533.8" x2="1033.9" y2="539.8" stroke="#d0d0d0" stroke-width="1.5"/><text x="1033.9" y="556" font-size="16.2" fill="#d0d0d0" text-anchor="middle" font-weight="normal"  textLength="16.68" lengthAdjust="spacingAndGlyphs">60</text><line x1="1086.9" y1="533.8" x2="1086.9" y2="539.8" stroke="#d0d0d0" stroke-width="1.5"/><text x="1086.9" y="556" font-size="16.2" fill="#d0d0d0" text-anchor="middle" font-weight="normal"  textLength="16.68" lengthAdjust="spacingAndGlyphs">70</text><line x1="1139.9" y1="533.8" x2="1139.9" y2="539.8" stroke="#d0d0d0" stroke-width="1.5"/><text x="1139.9" y="556" font-size="16.2" fill="#d0d0d0" text-anchor="middle" font-weight="normal"  textLength="16.68" lengthAdjust="spacingAndGlyphs">80</text><line x1="1193.0" y1="533.8" x2="1193.0" y2="539.8" stroke="#d0d0d0" stroke-width="1.5"/><text x="1193.0" y="556" font-size="16.2" fill="#d0d0d0" text-anchor="middle" font-weight="normal"  textLength="16.68" lengthAdjust="spacingAndGlyphs">90</text><line x1="1246.0" y1="533.8" x2="1246.0" y2="539.8" stroke="#d0d0d0" stroke-width="1.5"/><text x="1246.0" y="556" font-size="16.2" fill="#d0d0d0" text-anchor="middle" font-weight="normal"  textLength="25.02" lengthAdjust="spacingAndGlyphs">100</text><polyline points="715.7,358.0 768.7,393.6 821.8,387.7 874.8,386.8 927.8,383.5 980.9,379.3 1033.9,379.3 1086.9,378.4 1139.9,379.3 1193.0,380.1 1246.0,365.0" fill="none" stroke="#10a010" stroke-width="3" stroke-linejoin="round"/><polyline points="715.7,361.5 768.7,397.8 821.8,390.2 874.8,388.5 927.8,385.2 980.9,381.0 1033.9,381.0 1086.9,380.1 1139.9,381.8 1193.0,382.6 1246.0,367.5" fill="none" stroke="#e01010" stroke-width="3" stroke-linejoin="round"/><polyline points="715.7,352.4 768.7,386.8 821.8,383.9 874.8,383.1 927.8,380.1 980.9,376.8 1033.9,375.1 1086.9,374.2 1139.9,375.1 1193.0,373.4 1246.0,343.2" fill="none" stroke="#1010f0" stroke-width="3.5" stroke-linejoin="round"/><rect x="715.7" y="192.8" width="530.3" height="340.99999999999994" fill="none" stroke="#a8a8a8" stroke-width="1.5"/><text x="1568.5" y="187" font-size="14.5" fill="#d0d0d0" text-anchor="middle" font-weight="normal"  textLength="111.5" lengthAdjust="spacingAndGlyphs">Gamma Log/Log</text><rect x="1313.5" y="192.7" width="535.5" height="340.8" fill="#232323"/><line x1="1313.5" y1="529.5" x2="1849" y2="529.5" stroke="#a8a8a8" stroke-width="1.3"/><line x1="1307.5" y1="529.5" x2="1313.5" y2="529.5" stroke="#d0d0d0" stroke-width="1.5"/><text x="1307.5" y="535.5" font-size="16.2" fill="#d0d0d0" text-anchor="end" font-weight="normal"  textLength="8.34" lengthAdjust="spacingAndGlyphs">1</text><line x1="1313.5" y1="486.5" x2="1849" y2="486.5" stroke="#a8a8a8" stroke-width="1.3"/><line x1="1307.5" y1="486.5" x2="1313.5" y2="486.5" stroke="#d0d0d0" stroke-width="1.5"/><text x="1307.5" y="492.5" font-size="16.2" fill="#d0d0d0" text-anchor="end" font-weight="normal"  textLength="20.85" lengthAdjust="spacingAndGlyphs">1,2</text><line x1="1313.5" y1="444.5" x2="1849" y2="444.5" stroke="#a8a8a8" stroke-width="1.3"/><line x1="1307.5" y1="444.5" x2="1313.5" y2="444.5" stroke="#d0d0d0" stroke-width="1.5"/><text x="1307.5" y="450.5" font-size="16.2" fill="#d0d0d0" text-anchor="end" font-weight="normal"  textLength="20.85" lengthAdjust="spacingAndGlyphs">1,4</text><line x1="1313.5" y1="401.5" x2="1849" y2="401.5" stroke="#a8a8a8" stroke-width="1.3"/><line x1="1307.5" y1="401.5" x2="1313.5" y2="401.5" stroke="#d0d0d0" stroke-width="1.5"/><text x="1307.5" y="407.5" font-size="16.2" fill="#d0d0d0" text-anchor="end" font-weight="normal"  textLength="20.85" lengthAdjust="spacingAndGlyphs">1,6</text><line x1="1313.5" y1="359.5" x2="1849" y2="359.5" stroke="#a8a8a8" stroke-width="1.3"/><line x1="1307.5" y1="359.5" x2="1313.5" y2="359.5" stroke="#d0d0d0" stroke-width="1.5"/><text x="1307.5" y="365.5" font-size="16.2" fill="#d0d0d0" text-anchor="end" font-weight="normal"  textLength="20.85" lengthAdjust="spacingAndGlyphs">1,8</text><line x1="1313.5" y1="316.5" x2="1849" y2="316.5" stroke="#a8a8a8" stroke-width="1.3"/><line x1="1307.5" y1="316.5" x2="1313.5" y2="316.5" stroke="#d0d0d0" stroke-width="1.5"/><text x="1307.5" y="322.5" font-size="16.2" fill="#d0d0d0" text-anchor="end" font-weight="normal"  textLength="8.34" lengthAdjust="spacingAndGlyphs">2</text><line x1="1313.5" y1="274.5" x2="1849" y2="274.5" stroke="#a8a8a8" stroke-width="1.3"/><line x1="1307.5" y1="274.5" x2="1313.5" y2="274.5" stroke="#d0d0d0" stroke-width="1.5"/><text x="1307.5" y="280.5" font-size="16.2" fill="#d0d0d0" text-anchor="end" font-weight="normal"  textLength="20.85" lengthAdjust="spacingAndGlyphs">2,2</text><line x1="1313.5" y1="231.5" x2="1849" y2="231.5" stroke="#a8a8a8" stroke-width="1.3"/><line x1="1307.5" y1="231.5" x2="1313.5" y2="231.5" stroke="#d0d0d0" stroke-width="1.5"/><text x="1307.5" y="237.5" font-size="16.2" fill="#d0d0d0" text-anchor="end" font-weight="normal"  textLength="20.85" lengthAdjust="spacingAndGlyphs">2,4</text><line x1="1313.5" y1="533.5" x2="1313.5" y2="539.5" stroke="#d0d0d0" stroke-width="1.5"/><text x="1313.5" y="556" font-size="16.2" fill="#d0d0d0" text-anchor="middle" font-weight="normal"  textLength="8.34" lengthAdjust="spacingAndGlyphs">0</text><line x1="1367.0" y1="533.5" x2="1367.0" y2="539.5" stroke="#d0d0d0" stroke-width="1.5"/><text x="1367.0" y="556" font-size="16.2" fill="#d0d0d0" text-anchor="middle" font-weight="normal"  textLength="16.68" lengthAdjust="spacingAndGlyphs">10</text><line x1="1420.6" y1="533.5" x2="1420.6" y2="539.5" stroke="#d0d0d0" stroke-width="1.5"/><text x="1420.6" y="556" font-size="16.2" fill="#d0d0d0" text-anchor="middle" font-weight="normal"  textLength="16.68" lengthAdjust="spacingAndGlyphs">20</text><line x1="1474.2" y1="533.5" x2="1474.2" y2="539.5" stroke="#d0d0d0" stroke-width="1.5"/><text x="1474.2" y="556" font-size="16.2" fill="#d0d0d0" text-anchor="middle" font-weight="normal"  textLength="16.68" lengthAdjust="spacingAndGlyphs">30</text><line x1="1527.7" y1="533.5" x2="1527.7" y2="539.5" stroke="#d0d0d0" stroke-width="1.5"/><text x="1527.7" y="556" font-size="16.2" fill="#d0d0d0" text-anchor="middle" font-weight="normal"  textLength="16.68" lengthAdjust="spacingAndGlyphs">40</text><line x1="1581.2" y1="533.5" x2="1581.2" y2="539.5" stroke="#d0d0d0" stroke-width="1.5"/><text x="1581.2" y="556" font-size="16.2" fill="#d0d0d0" text-anchor="middle" font-weight="normal"  textLength="16.68" lengthAdjust="spacingAndGlyphs">50</text><line x1="1634.8" y1="533.5" x2="1634.8" y2="539.5" stroke="#d0d0d0" stroke-width="1.5"/><text x="1634.8" y="556" font-size="16.2" fill="#d0d0d0" text-anchor="middle" font-weight="normal"  textLength="16.68" lengthAdjust="spacingAndGlyphs">60</text><line x1="1688.3" y1="533.5" x2="1688.3" y2="539.5" stroke="#d0d0d0" stroke-width="1.5"/><text x="1688.3" y="556" font-size="16.2" fill="#d0d0d0" text-anchor="middle" font-weight="normal"  textLength="16.68" lengthAdjust="spacingAndGlyphs">70</text><line x1="1741.9" y1="533.5" x2="1741.9" y2="539.5" stroke="#d0d0d0" stroke-width="1.5"/><text x="1741.9" y="556" font-size="16.2" fill="#d0d0d0" text-anchor="middle" font-weight="normal"  textLength="16.68" lengthAdjust="spacingAndGlyphs">80</text><line x1="1795.5" y1="533.5" x2="1795.5" y2="539.5" stroke="#d0d0d0" stroke-width="1.5"/><text x="1795.5" y="556" font-size="16.2" fill="#d0d0d0" text-anchor="middle" font-weight="normal"  textLength="16.68" lengthAdjust="spacingAndGlyphs">90</text><line x1="1849.0" y1="533.5" x2="1849.0" y2="539.5" stroke="#d0d0d0" stroke-width="1.5"/><text x="1849.0" y="556" font-size="16.2" fill="#d0d0d0" text-anchor="middle" font-weight="normal"  textLength="25.02" lengthAdjust="spacingAndGlyphs">100</text><clipPath id="gclip"><rect x="1313.5" y="192.7" width="535.5" height="340.8"/></clipPath><polyline clip-path="url(#gclip)" points="1313.5,469.9 1367.0,265.5 1420.6,259.1 1474.2,250.6 1527.7,246.3 1581.2,244.2 1634.8,237.8 1688.3,227.2 1741.9,205.9 1795.5,193.2 1849.0,259.1" fill="none" stroke="#8a8a8a" stroke-width="3" stroke-linejoin="round"/><polyline clip-path="url(#gclip)" points="1313.5,469.9 1318.9,406.1 1324.2,381.6 1329.6,367.1 1334.9,354.8 1340.3,343.6 1345.6,334.8 1351.0,327.7 1356.3,321.8 1361.7,316.7 1367.0,312.4 1372.4,308.7 1377.8,305.3 1383.1,302.4 1388.5,299.8 1393.8,297.4 1399.2,295.2 1404.5,293.2 1409.9,291.4 1415.2,289.7 1420.6,288.2 1426.0,286.8 1431.3,285.4 1436.7,284.2 1442.0,283.0 1447.4,281.9 1452.7,280.9 1458.1,279.9 1463.4,279.0 1468.8,278.2 1474.2,277.3 1479.5,276.5 1484.9,275.8 1490.2,275.1 1495.6,274.4 1500.9,273.8 1506.3,273.2 1511.6,272.6 1517.0,272.0 1522.3,271.5 1527.7,270.9 1533.1,270.4 1538.4,270.0 1543.8,269.5 1549.1,269.0 1554.5,268.6 1559.8,268.2 1565.2,267.8 1570.5,267.4 1575.9,267.0 1581.2,266.7 1586.6,266.3 1592.0,266.0 1597.3,265.6 1602.7,265.3 1608.0,265.0 1613.4,264.7 1618.7,264.4 1624.1,264.1 1629.4,263.8 1634.8,263.6 1640.2,263.3 1645.5,263.0 1650.9,262.8 1656.2,262.5 1661.6,262.3 1666.9,262.1 1672.3,261.8 1677.6,261.6 1683.0,261.4 1688.3,261.2 1693.7,261.0 1699.1,260.8 1704.4,260.6 1709.8,260.4 1715.1,260.2 1720.5,260.0 1725.8,259.8 1731.2,259.6 1736.5,259.5 1741.9,259.3 1747.3,259.1 1752.6,259.0 1758.0,258.8 1763.3,258.6 1768.7,258.5 1774.0,258.3 1779.4,258.2 1784.7,258.0 1790.1,257.9 1795.5,257.7 1800.8,257.6 1806.2,257.5 1811.5,257.3 1816.9,257.2 1822.2,257.1 1827.6,256.9 1832.9,256.8 1838.3,256.7 1843.6,256.6 1849.0,256.3" fill="none" stroke="#f0f000" stroke-width="3" stroke-linejoin="round"/><rect x="1313.5" y="192.7" width="535.5" height="340.8" fill="none" stroke="#a8a8a8" stroke-width="1.5"/>
<text x="526.0" y="712" font-size="13" fill="#f4f4f4" text-anchor="middle" font-weight="normal" >0</text><text x="644.0" y="712" font-size="13" fill="#f4f4f4" text-anchor="middle" font-weight="normal" >10</text><text x="763.0" y="712" font-size="13" fill="#f4f4f4" text-anchor="middle" font-weight="normal" >20</text><text x="881.0" y="712" font-size="13" fill="#f4f4f4" text-anchor="middle" font-weight="normal" >30</text><text x="1000.0" y="712" font-size="13" fill="#f4f4f4" text-anchor="middle" font-weight="normal" >40</text><text x="1119.0" y="712" font-size="13" fill="#f4f4f4" text-anchor="middle" font-weight="normal" >50</text><text x="1237.0" y="712" font-size="13" fill="#f4f4f4" text-anchor="middle" font-weight="normal" >60</text><text x="1356.0" y="712" font-size="13" fill="#f4f4f4" text-anchor="middle" font-weight="normal" >70</text><text x="1474.0" y="712" font-size="13" fill="#f4f4f4" text-anchor="middle" font-weight="normal" >80</text><text x="1593.0" y="712" font-size="13" fill="#f4f4f4" text-anchor="middle" font-weight="normal" >90</text><text x="1711.0" y="712" font-size="13" fill="#f4f4f4" text-anchor="middle" font-weight="normal" >100</text><text x="0" y="0" font-size="12.5" fill="#f0f0f0" text-anchor="middle" font-weight="normal" transform="translate(467 632) rotate(-90)">Actual</text><text x="0" y="0" font-size="12.5" fill="#f0f0f0" text-anchor="middle" font-weight="normal" transform="translate(467 679.5) rotate(-90)">Target</text><text x="215.6" y="767.8" font-size="29.5" fill="#f2f2f2" text-anchor="start" font-weight="normal"  textLength="224.9" lengthAdjust="spacingAndGlyphs">Current Reading</text><text x="215.6" y="810.8" font-size="25.3" fill="#f2f2f2" text-anchor="start" font-weight="normal"  textLength="105" lengthAdjust="spacingAndGlyphs">x: 0,3078</text><text x="215.6" y="852.8" font-size="25.3" fill="#f2f2f2" text-anchor="start" font-weight="normal"  textLength="90.7" lengthAdjust="spacingAndGlyphs">y: 0,322</text><text x="215.6" y="894.8" font-size="25.3" fill="#f2f2f2" text-anchor="start" font-weight="normal"  textLength="113.2" lengthAdjust="spacingAndGlyphs">fL: 97,767</text><text x="215.6" y="936.8" font-size="25.3" fill="#f2f2f2" text-anchor="start" font-weight="normal"  textLength="177.8" lengthAdjust="spacingAndGlyphs">cd/m&#178;: 334,974</text><text x="576.5" y="765" font-size="15" fill="#d8d8d8" text-anchor="end" font-weight="normal" >0,35</text><line x1="577" y1="759.7" x2="583" y2="759.7" stroke="#ddd" stroke-width="1.5"/><text x="576.5" y="800.67" font-size="15" fill="#d8d8d8" text-anchor="end" font-weight="normal" >0,34</text><line x1="577" y1="795.4" x2="583" y2="795.4" stroke="#ddd" stroke-width="1.5"/><text x="576.5" y="836.34" font-size="15" fill="#d8d8d8" text-anchor="end" font-weight="normal" >0,33</text><line x1="577" y1="831.0" x2="583" y2="831.0" stroke="#ddd" stroke-width="1.5"/><text x="576.5" y="872.01" font-size="15" fill="#d8d8d8" text-anchor="end" font-weight="normal" >0,32</text><line x1="577" y1="866.7" x2="583" y2="866.7" stroke="#ddd" stroke-width="1.5"/><text x="576.5" y="907.6800000000001" font-size="15" fill="#d8d8d8" text-anchor="end" font-weight="normal" >0,31</text><line x1="577" y1="902.4" x2="583" y2="902.4" stroke="#ddd" stroke-width="1.5"/><line x1="593.4" y1="922" x2="593.4" y2="929" stroke="#ddd" stroke-width="1.5"/><text x="593.4" y="944.3" font-size="15" fill="#d8d8d8" text-anchor="middle" font-weight="normal" >0,29</text><line x1="642.4" y1="922" x2="642.4" y2="929" stroke="#ddd" stroke-width="1.5"/><text x="642.4" y="944.3" font-size="15" fill="#d8d8d8" text-anchor="middle" font-weight="normal" >0,3</text><line x1="691.4" y1="922" x2="691.4" y2="929" stroke="#ddd" stroke-width="1.5"/><text x="691.4" y="944.3" font-size="15" fill="#d8d8d8" text-anchor="middle" font-weight="normal" >0,31</text><line x1="740.4" y1="922" x2="740.4" y2="929" stroke="#ddd" stroke-width="1.5"/><text x="740.4" y="944.3" font-size="15" fill="#d8d8d8" text-anchor="middle" font-weight="normal" >0,32</text><line x1="789.4" y1="922" x2="789.4" y2="929" stroke="#ddd" stroke-width="1.5"/><text x="789.4" y="944.3" font-size="15" fill="#d8d8d8" text-anchor="middle" font-weight="normal" >0,33</text><clipPath id="cclip"><rect x="583" y="745" width="246" height="177"/></clipPath><rect x="583.5" y="745.5" width="245" height="176.5" fill="none" stroke="#9a9a9a" stroke-width="1"/><line clip-path="url(#cclip)" x1="615.6" y1="923" x2="830.4" y2="773.5" stroke="#000" stroke-width="3"/><circle cx="645" cy="886.9" r="4.8" fill="#1a1a1a" stroke="#000" stroke-width="1"/><circle cx="682.1" cy="857.6" r="4.2" fill="#fff" stroke="#000" stroke-width="1"/><circle cx="687.2" cy="844.9" r="4.6" fill="#333" stroke="#000" stroke-width="1"/><circle cx="697.5" cy="838.5" r="4.3" fill="#777" stroke="#222" stroke-width="1"/><circle cx="699.5" cy="836" r="4.3" fill="#aaa" stroke="#333" stroke-width="1"/><circle cx="700.8" cy="834.5" r="4.3" fill="#999" stroke="#333" stroke-width="1"/><circle cx="695.9" cy="842.2" r="4.3" fill="#ddd" stroke="#333" stroke-width="1"/><rect x="699.6" y="827.3" width="12" height="12" fill="none" stroke="#000" stroke-width="2"/><text x="1035.0" y="756" font-size="16" fill="#f4f4f4" text-anchor="middle" font-weight="normal" >0</text><text x="1106.0" y="756" font-size="16" fill="#f4f4f4" text-anchor="middle" font-weight="normal" >10</text><text x="1172.5" y="756" font-size="16" fill="#f4f4f4" text-anchor="middle" font-weight="normal" >20</text><text x="1239.0" y="756" font-size="16" fill="#f4f4f4" text-anchor="middle" font-weight="normal" >30</text><text x="1305.5" y="756" font-size="16" fill="#f4f4f4" text-anchor="middle" font-weight="normal" >40</text><text x="1372.0" y="756" font-size="16" fill="#f4f4f4" text-anchor="middle" font-weight="normal" >50</text><text x="1438.5" y="756" font-size="16" fill="#f4f4f4" text-anchor="middle" font-weight="normal" >60</text><text x="1505.0" y="756" font-size="16" fill="#f4f4f4" text-anchor="middle" font-weight="normal" >70</text><text x="1571.5" y="756" font-size="16" fill="#f4f4f4" text-anchor="middle" font-weight="normal" >80</text><text x="1638.0" y="756" font-size="16" fill="#f4f4f4" text-anchor="middle" font-weight="normal" >90</text><text x="1704.5" y="756" font-size="16" fill="#f4f4f4" text-anchor="middle" font-weight="normal" >100</text><text x="853.4" y="784.0" font-size="16" fill="#f0f0f0" text-anchor="start" font-weight="bold"  textLength="61.5" lengthAdjust="spacingAndGlyphs">x: CIE31</text><text x="1001.6" y="784.0" font-size="16" fill="#f0f0f0" text-anchor="start" font-weight="normal" >0,25</text><text x="1077.0" y="784.0" font-size="16" fill="#f0f0f0" text-anchor="start" font-weight="normal" >0,30</text><text x="1143.5" y="784.0" font-size="16" fill="#f0f0f0" text-anchor="start" font-weight="normal" >0,31</text><text x="1210.0" y="784.0" font-size="16" fill="#f0f0f0" text-anchor="start" font-weight="normal" >0,31</text><text x="1276.5" y="784.0" font-size="16" fill="#f0f0f0" text-anchor="start" font-weight="normal" >0,31</text><text x="1343.0" y="784.0" font-size="16" fill="#f0f0f0" text-anchor="start" font-weight="normal" >0,31</text><text x="1409.5" y="784.0" font-size="16" fill="#f0f0f0" text-anchor="start" font-weight="normal" >0,31</text><text x="1476.0" y="784.0" font-size="16" fill="#f0f0f0" text-anchor="start" font-weight="normal" >0,31</text><text x="1542.5" y="784.0" font-size="16" fill="#f0f0f0" text-anchor="start" font-weight="normal" >0,31</text><text x="1609.0" y="784.0" font-size="16" fill="#f0f0f0" text-anchor="start" font-weight="normal" >0,31</text><text x="1675.5" y="784.0" font-size="16" fill="#f0f0f0" text-anchor="start" font-weight="normal" >0,31</text><text x="853.4" y="811.0" font-size="16" fill="#f0f0f0" text-anchor="start" font-weight="bold"  textLength="61.5" lengthAdjust="spacingAndGlyphs">y: CIE31</text><text x="1001.6" y="811.0" font-size="16" fill="#f0f0f0" text-anchor="start" font-weight="normal" >0,24</text><text x="1077.0" y="811.0" font-size="16" fill="#f0f0f0" text-anchor="start" font-weight="normal" >0,31</text><text x="1143.5" y="811.0" font-size="16" fill="#f0f0f0" text-anchor="start" font-weight="normal" >0,33</text><text x="1210.0" y="811.0" font-size="16" fill="#f0f0f0" text-anchor="start" font-weight="normal" >0,33</text><text x="1276.5" y="811.0" font-size="16" fill="#f0f0f0" text-anchor="start" font-weight="normal" >0,33</text><text x="1343.0" y="811.0" font-size="16" fill="#f0f0f0" text-anchor="start" font-weight="normal" >0,33</text><text x="1409.5" y="811.0" font-size="16" fill="#f0f0f0" text-anchor="start" font-weight="normal" >0,33</text><text x="1476.0" y="811.0" font-size="16" fill="#f0f0f0" text-anchor="start" font-weight="normal" >0,33</text><text x="1542.5" y="811.0" font-size="16" fill="#f0f0f0" text-anchor="start" font-weight="normal" >0,33</text><text x="1609.0" y="811.0" font-size="16" fill="#f0f0f0" text-anchor="start" font-weight="normal" >0,33</text><text x="1675.5" y="811.0" font-size="16" fill="#f0f0f0" text-anchor="start" font-weight="normal" >0,32</text><text x="853.4" y="837.7" font-size="16" fill="#f0f0f0" text-anchor="start" font-weight="bold"  textLength="9.8" lengthAdjust="spacingAndGlyphs">Y</text><text x="1001.6" y="837.7" font-size="16" fill="#f0f0f0" text-anchor="start" font-weight="normal" >0,24</text><text x="1077.0" y="837.7" font-size="16" fill="#f0f0f0" text-anchor="start" font-weight="normal" >2,05</text><text x="1143.5" y="837.7" font-size="16" fill="#f0f0f0" text-anchor="start" font-weight="normal" >8,74</text><text x="1210.0" y="837.7" font-size="16" fill="#f0f0f0" text-anchor="start" font-weight="normal" >20,36</text><text x="1276.5" y="837.7" font-size="16" fill="#f0f0f0" text-anchor="start" font-weight="normal" >39,53</text><text x="1343.0" y="837.7" font-size="16" fill="#f0f0f0" text-anchor="start" font-weight="normal" >66,79</text><text x="1409.5" y="837.7" font-size="16" fill="#f0f0f0" text-anchor="start" font-weight="normal" >99,83</text><text x="1476.0" y="837.7" font-size="16" fill="#f0f0f0" text-anchor="start" font-weight="normal" >140,57</text><text x="1542.5" y="837.7" font-size="16" fill="#f0f0f0" text-anchor="start" font-weight="normal" >190,72</text><text x="1609.0" y="837.7" font-size="16" fill="#f0f0f0" text-anchor="start" font-weight="normal" >250,63</text><text x="1675.5" y="837.7" font-size="16" fill="#f0f0f0" text-anchor="start" font-weight="normal" >334,97</text><text x="853.4" y="864.6" font-size="16" fill="#f0f0f0" text-anchor="start" font-weight="bold"  textLength="64.7" lengthAdjust="spacingAndGlyphs">Target Y</text><text x="1001.6" y="864.6" font-size="16" fill="#f0f0f0" text-anchor="start" font-weight="normal" >0,00</text><text x="1077.0" y="864.6" font-size="16" fill="#f0f0f0" text-anchor="start" font-weight="normal" >3,46</text><text x="1143.5" y="864.6" font-size="16" fill="#f0f0f0" text-anchor="start" font-weight="normal" >11,09</text><text x="1210.0" y="864.6" font-size="16" fill="#f0f0f0" text-anchor="start" font-weight="normal" >24,21</text><text x="1276.5" y="864.6" font-size="16" fill="#f0f0f0" text-anchor="start" font-weight="normal" >44,51</text><text x="1343.0" y="864.6" font-size="16" fill="#f0f0f0" text-anchor="start" font-weight="normal" >72,31</text><text x="1409.5" y="864.6" font-size="16" fill="#f0f0f0" text-anchor="start" font-weight="normal" >106,70</text><text x="1476.0" y="864.6" font-size="16" fill="#f0f0f0" text-anchor="start" font-weight="normal" >149,13</text><text x="1542.5" y="864.6" font-size="16" fill="#f0f0f0" text-anchor="start" font-weight="normal" >202,27</text><text x="1609.0" y="864.6" font-size="16" fill="#f0f0f0" text-anchor="start" font-weight="normal" >265,06</text><text x="1675.5" y="864.6" font-size="16" fill="#f0f0f0" text-anchor="start" font-weight="normal" >334,97</text><text x="853.4" y="891.5" font-size="16" fill="#f0f0f0" text-anchor="start" font-weight="bold"  textLength="131" lengthAdjust="spacingAndGlyphs">Gamma Log/Log</text><text x="1001.6" y="891.5" font-size="16" fill="#f0f0f0" text-anchor="start" font-weight="normal" >1,28</text><text x="1077.0" y="891.5" font-size="16" fill="#f0f0f0" text-anchor="start" font-weight="normal" >2,23</text><text x="1143.5" y="891.5" font-size="16" fill="#f0f0f0" text-anchor="start" font-weight="normal" >2,27</text><text x="1210.0" y="891.5" font-size="16" fill="#f0f0f0" text-anchor="start" font-weight="normal" >2,31</text><text x="1276.5" y="891.5" font-size="16" fill="#f0f0f0" text-anchor="start" font-weight="normal" >2,33</text><text x="1343.0" y="891.5" font-size="16" fill="#f0f0f0" text-anchor="start" font-weight="normal" >2,34</text><text x="1409.5" y="891.5" font-size="16" fill="#f0f0f0" text-anchor="start" font-weight="normal" >2,37</text><text x="1476.0" y="891.5" font-size="16" fill="#f0f0f0" text-anchor="start" font-weight="normal" >2,42</text><text x="1542.5" y="891.5" font-size="16" fill="#f0f0f0" text-anchor="start" font-weight="normal" >2,52</text><text x="1609.0" y="891.5" font-size="16" fill="#f0f0f0" text-anchor="start" font-weight="normal" >2,81</text><text x="1675.5" y="891.5" font-size="16" fill="#f0f0f0" text-anchor="start" font-weight="normal" >2,27</text><text x="853.4" y="918.1" font-size="16" fill="#f0f0f0" text-anchor="start" font-weight="bold"  textLength="29.5" lengthAdjust="spacingAndGlyphs">CCT</text><text x="1001.6" y="918.1" font-size="16" fill="#f0f0f0" text-anchor="start" font-weight="normal" >28205,00</text><text x="1077.0" y="918.1" font-size="16" fill="#f0f0f0" text-anchor="start" font-weight="normal" >7427,00</text><text x="1143.5" y="918.1" font-size="16" fill="#f0f0f0" text-anchor="start" font-weight="normal" >6734,00</text><text x="1210.0" y="918.1" font-size="16" fill="#f0f0f0" text-anchor="start" font-weight="normal" >6627,00</text><text x="1276.5" y="918.1" font-size="16" fill="#f0f0f0" text-anchor="start" font-weight="normal" >6591,00</text><text x="1343.0" y="918.1" font-size="16" fill="#f0f0f0" text-anchor="start" font-weight="normal" >6578,00</text><text x="1409.5" y="918.1" font-size="16" fill="#f0f0f0" text-anchor="start" font-weight="normal" >6575,00</text><text x="1476.0" y="918.1" font-size="16" fill="#f0f0f0" text-anchor="start" font-weight="normal" >6581,00</text><text x="1542.5" y="918.1" font-size="16" fill="#f0f0f0" text-anchor="start" font-weight="normal" >6595,00</text><text x="1609.0" y="918.1" font-size="16" fill="#f0f0f0" text-anchor="start" font-weight="normal" >6630,00</text><text x="1675.5" y="918.1" font-size="16" fill="#f0f0f0" text-anchor="start" font-weight="normal" >6846,00</text><text x="853.4" y="944.9" font-size="16" fill="#f0f0f0" text-anchor="start" font-weight="bold"  textLength="63.9" lengthAdjust="spacingAndGlyphs">&#916;E 2000</text><text x="1001.6" y="944.9" font-size="16" fill="#f0f0f0" text-anchor="start" font-weight="normal" >1,22</text><text x="1077.0" y="944.9" font-size="16" fill="#f0f0f0" text-anchor="start" font-weight="normal" >2,60</text><text x="1143.5" y="944.9" font-size="16" fill="#f0f0f0" text-anchor="start" font-weight="normal" >2,05</text><text x="1210.0" y="944.9" font-size="16" fill="#f0f0f0" text-anchor="start" font-weight="normal" >2,16</text><text x="1276.5" y="944.9" font-size="16" fill="#f0f0f0" text-anchor="start" font-weight="normal" >2,13</text><text x="1343.0" y="944.9" font-size="16" fill="#f0f0f0" text-anchor="start" font-weight="normal" >1,83</text><text x="1409.5" y="944.9" font-size="16" fill="#f0f0f0" text-anchor="start" font-weight="normal" >1,55</text><text x="1476.0" y="944.9" font-size="16" fill="#f0f0f0" text-anchor="start" font-weight="normal" >1,40</text><text x="1542.5" y="944.9" font-size="16" fill="#f0f0f0" text-anchor="start" font-weight="normal" >1,48</text><text x="1609.0" y="944.9" font-size="16" fill="#f0f0f0" text-anchor="start" font-weight="normal" >1,71</text><text x="1675.5" y="944.9" font-size="16" fill="#f0f0f0" text-anchor="start" font-weight="normal" >3,59</text><text x="263.5" y="1044" font-size="11" fill="#2a2a2a" text-anchor="middle" font-weight="bold" >0</text><text x="390.4" y="1044" font-size="11" fill="#2a2a2a" text-anchor="middle" font-weight="bold" >10</text><text x="517.3" y="1044" font-size="11" fill="#2a2a2a" text-anchor="middle" font-weight="bold" >20</text><text x="644.2" y="1044" font-size="11" fill="#2a2a2a" text-anchor="middle" font-weight="bold" >30</text><text x="771.1" y="1044" font-size="11" fill="#2a2a2a" text-anchor="middle" font-weight="bold" >40</text><text x="898.0" y="1044" font-size="11" fill="#2a2a2a" text-anchor="middle" font-weight="bold" >50</text><text x="1024.9" y="1044" font-size="11" fill="#2a2a2a" text-anchor="middle" font-weight="bold" >60</text><text x="1151.8" y="1044" font-size="11" fill="#2a2a2a" text-anchor="middle" font-weight="bold" >70</text><text x="1278.7" y="1044" font-size="11" fill="#2a2a2a" text-anchor="middle" font-weight="bold" >80</text><text x="1405.6" y="1044" font-size="11" fill="#2a2a2a" text-anchor="middle" font-weight="bold" >90</text><text x="1532.5" y="1044" font-size="11" fill="#fff" text-anchor="middle" font-weight="bold" >100</text><path d="M1617 1000 L1621 996 L1625 1000 Z" fill="#333"/><rect x="1665.2" y="999.4" width="7.5" height="7.2" fill="#2e2e2e"/><path d="M1712 999 L1720 1003.8 L1712 1008.5 Z" fill="#2e2e2e"/><path d="M1756.5 1001.2 H1754.6 V1008.6 H1756.5 M1763 1001.2 H1765 V1008.6 H1763" fill="none" stroke="#2e2e2e" stroke-width="1.8"/><rect x="1757.6" y="1003" width="1.6" height="1.6" fill="#2e2e2e"/><rect x="1760.6" y="1003" width="1.6" height="1.6" fill="#2e2e2e"/><path d="M1805 1003 C1802 999.8 1798.6 1000.3 1798.6 1003 C1798.6 1005.7 1802 1006.2 1805 1003 C1808 999.8 1811.4 1000.3 1811.4 1003 C1811.4 1005.7 1808 1006.2 1805 1003 Z" fill="none" stroke="#2e2e2e" stroke-width="1.9"/><path d="M1845.6 1002.8 A4.6 4.6 0 0 1 1853.2 1000 M1854.4 1004.8 A4.6 4.6 0 0 1 1846.8 1007.6" fill="none" stroke="#2e2e2e" stroke-width="2.2"/><path d="M1851 997.5 L1856 999 L1852.8 1002.6 Z M1849 1010.2 L1844 1008.6 L1847.2 1005 Z" fill="#2e2e2e"/><path d="M1677 1029.6 L1672.5 1034.1 L1677 1038.6 M1681 1029.6 L1676.5 1034.1 L1681 1038.6" fill="none" stroke="#2e2e2e" stroke-width="1.6"/><path d="M1886 1029.8 L1890.5 1034.2 L1886 1038.6 M1890 1029.8 L1894.5 1034.2 L1890 1038.6" fill="none" stroke="#2e2e2e" stroke-width="1.6"/><text x="1703.7" y="1041.5" font-size="21" fill="#333" text-anchor="start" font-weight="bold"  textLength="49.7" lengthAdjust="spacingAndGlyphs">Back</text><text x="1810.7" y="1041.7" font-size="21" fill="#333" text-anchor="start" font-weight="bold"  textLength="51.2" lengthAdjust="spacingAndGlyphs">Next</text>
</svg>
</body></html>
